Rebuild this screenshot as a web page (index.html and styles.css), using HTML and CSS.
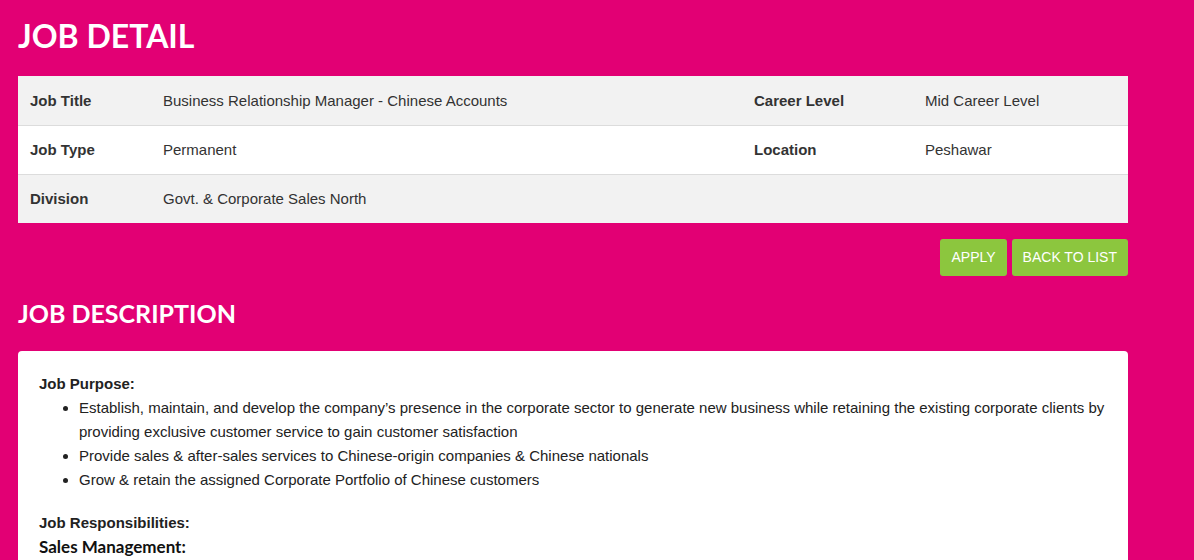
FILE: index.html
```html
<!DOCTYPE html>
<html lang="en">
<head>
    <meta charset="UTF-8">
    <meta name="viewport" content="width=device-width, initial-scale=1.0">
    <title>Job Detail</title>
<link rel="stylesheet" href="styles.css">
</head>
<body>
    <div class="page">
        <h1 class="section-title">JOB DETAIL</h1>

        <table class="job-table">
            <colgroup>
                <col class="col-label">
                <col class="col-value">
                <col class="col-label2">
                <col>
            </colgroup>
            <tr>
                <th>Job Title</th>
                <td>Business Relationship Manager - Chinese Accounts</td>
                <th>Career Level</th>
                <td>Mid Career Level</td>
            </tr>
            <tr>
                <th>Job Type</th>
                <td>Permanent</td>
                <th>Location</th>
                <td>Peshawar</td>
            </tr>
            <tr>
                <th>Division</th>
                <td>Govt. &amp; Corporate Sales North</td>
                <th></th>
                <td></td>
            </tr>
        </table>

        <div class="actions">
            <a href="#" class="btn">APPLY</a>
            <a href="#" class="btn">BACK TO LIST</a>
        </div>

        <h2 class="section-title small">JOB DESCRIPTION</h2>

        <div class="description">
            <p class="label">Job Purpose:</p>
            <ul>
                <li>Establish, maintain, and develop the company’s presence in the corporate sector to generate new business while retaining the existing corporate clients by providing exclusive customer service to gain customer satisfaction</li>
                <li>Provide sales &amp; after-sales services to Chinese-origin companies &amp; Chinese nationals</li>
                <li>Grow &amp; retain the assigned Corporate Portfolio of Chinese customers</li>
            </ul>
            <p class="label spaced">Job Responsibilities:</p>
            <h3 class="sub-title">Sales Management:</h3>
        </div>
    </div>
</body>
</html>
```

FILE: styles.css
```css
/* styles.css */
body {
    margin: 0;
    background-color: #e20074;
    font-family: 'Liberation Sans', Arial, sans-serif;
    color: #333;
}

.page {
    width: 1110px;
    padding: 14px 18px 0;
}

.section-title {
    font-family: 'Lato', sans-serif;
    font-weight: bold;
    color: #fff;
    font-size: 32px;
    margin: 0 0 18px;
    line-height: 44px;
}

.section-title.small {
    font-size: 25px;
    line-height: 36px;
    margin: 19px 0 20px;
}

.job-table {
    width: 100%;
    border-collapse: collapse;
    table-layout: fixed;
    font-size: 15px;
}

.col-label {
    width: 145px;
}

.col-value {
    width: 591px;
}

.col-label2 {
    width: 171px;
}

.job-table tr {
    background-color: #f2f2f2;
    height: 49px;
}

.job-table tr:nth-child(2) {
    background-color: #fff;
}

.job-table tr + tr {
    border-top: 1px solid #dcdcdc;
}

.job-table th,
.job-table td {
    text-align: left;
    padding: 0 12px 0 0;
    color: #333;
}

.job-table th:first-child {
    padding-left: 12px;
}

.job-table th {
    font-weight: bold;
}

.actions {
    display: flex;
    justify-content: flex-end;
    gap: 5px;
    margin-top: 16px;
}

.btn {
    display: inline-block;
    background-color: #8cc63e;
    color: #fff;
    text-decoration: none;
    font-size: 14px;
    line-height: 37px;
    padding: 0 11px;
    border-radius: 3px;
}

.description {
    background-color: #fff;
    border-radius: 4px;
    padding: 21px 21px 10px;
    font-size: 15px;
    color: #222;
    line-height: 24px;
}

.description p {
    margin: 0;
}

.description .label {
    font-weight: bold;
}

.description .label.spaced {
    margin-top: 19px;
}

.description ul {
    margin: 0;
    padding-left: 40px;
}

.sub-title {
    font-family: 'Lato', sans-serif;
    font-size: 17px;
    margin: 0;
    color: #111;
}
```
